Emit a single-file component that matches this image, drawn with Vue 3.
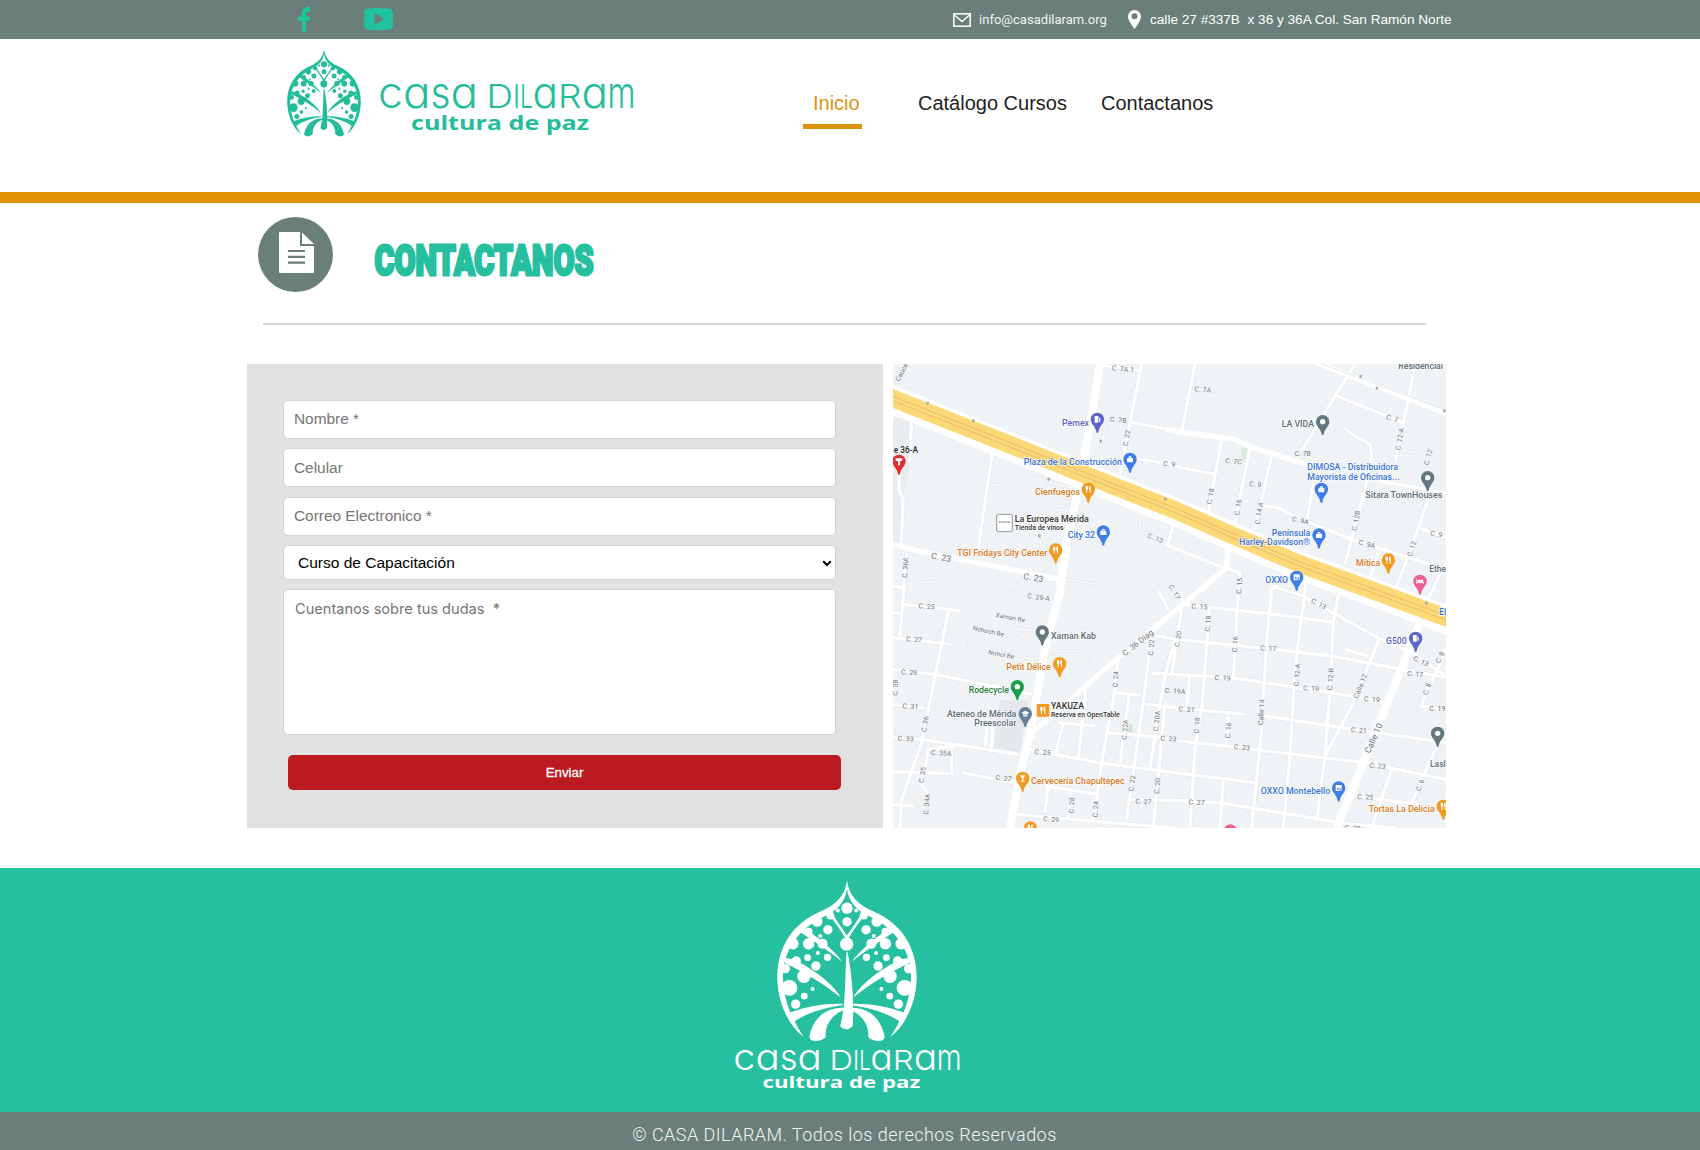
<script setup>
import { ref } from 'vue'

const nombre = ref('')
const celular = ref('')
const correo = ref('')
const curso = ref('Curso de Capacitación')
const dudas = ref('')

const wordmark = [
  { ch: 'c', x: -2, w: 25, low: true },
  { ch: 'a', x: 23, w: 27.5, low: true },
  { ch: 's', x: 50.5, w: 20, low: true },
  { ch: 'a', x: 70.5, w: 27.5, low: true },
  { ch: ' ', x: 98, w: 8, low: false },
  { ch: 'D', x: 106.5, w: 26.5, low: false },
  { ch: 'I', x: 133, w: 7, low: false },
  { ch: 'L', x: 140, w: 13, low: false },
  { ch: 'a', x: 152.5, w: 25.5, low: true },
  { ch: 'R', x: 178, w: 23.5, low: false },
  { ch: 'a', x: 201.5, w: 26.5, low: true },
  { ch: 'm', x: 227.5, w: 28, low: true },
]

// Left half of the tree crown; the right half is its mirror image.
const leaves = [
  [291, 183, 16], [330, 165, 12], [265, 214, 12], [323, 208, 14], [300, 227, 6],
  [218, 250, 17], [265, 250, 17], [307, 250, 15], [262, 292, 10], [293, 278, 6],
  [322, 291, 11], [287, 317, 14], [228, 302, 14], [195, 325, 14], [251, 348, 20],
  [207, 383, 24], [277, 386, 6], [252, 408, 10], [226, 432, 14], [353, 150, 6],
]

const C = {
  blue: '#3f7de8', blueText: '#3a74d8', orange: '#f29a1e', orangeText: '#df7a22',
  slate: '#62777f', slateText: '#5b6d75', violet: '#5b66c6', violetText: '#5d64c4',
  dark: '#333', green: '#1b9e4b', greenText: '#23813f', red: '#e02f2f', pink: '#ee5f92',
}

const wide = [
  'M645 24L625 150L600 290L580 400L545 560L525 705L480 880L435 1135L405 1250L375 1416',
  'M1605 800L1355 1416',
]
const medium = [
  'M24 565L100 585L525 670',
  'M435 1135L700 905L840 790L930 715L1025 635L1030 570',
  'M1295 20L1570 128L1683 172',
  'M840 218L890 228L1050 250L1100 275L1265 325',
]
const small = [
  'M930 24L890 228', 'M735 198L850 220', 'M322 290L280 575', 'M770 24L735 200L705 355', 'M655 28L770 45',
  'M1010 250L970 470', 'M1095 275L1050 500', 'M1163 285L1110 520', 'M840 325L990 355',
  'M735 305L840 322', 'M1135 450L1180 455L1240 485L1300 510L1400 550L1683 640',
  'M1590 24L1570 130L1530 320', 'M1630 430L1570 600L1535 690', 'M1480 375L1683 410',
  'M1460 300L1440 400L1410 510L1380 625', 'M1380 215L1400 235L1455 265L1460 300', 'M1410 24L1350 120L1250 285',
  'M1355 120L1555 200', 'M1285 380L1265 500', 'M1600 515L1683 545', 'M1480 590L1450 680',
  'M840 565L1015 635L1065 650L1060 705', 'M865 500L850 565', 'M80 190L74 320', 'M42 350L42 400L55 430L48 570',
  'M65 590L45 840', 'M24 690L55 695', 'M24 770L45 772', 'M55 745L225 765',
  'M190 765L110 1160L50 1330L45 1416', 'M24 845L200 865', 'M24 940L150 955L440 1015', 'M24 1045L120 1057',
  'M24 1145L110 1150L400 1195', 'M435 1180L640 1220L870 1250L1110 1280', 'M200 1165L200 1253L24 1247',
  'M130 1180L110 1290L130 1312', 'M130 1180L210 1170', 'M24 1345L85 1350', 'M230 1250L410 1285', 'M480 1290L640 1315',
  'M325 1100L318 1178', 'M305 1110L302 1170', 'M535 1100L510 1200', 'M602 1000L580 1205', 'M520 1100L630 1110',
  'M700 905L688 1010L650 1220L625 1400', 'M690 1010L770 1018', 'M732 1020L705 1220', 'M800 830L780 1000L745 1250L725 1390',
  'M870 855L840 955L820 1080L795 1240', 'M840 1040L825 1200L805 1416', 'M670 1130L840 1145', 'M780 1045L870 1055L1080 1075',
  'M800 950L860 955L1040 965L1400 1020L1490 1038', 'M800 835L860 848L1145 878L1340 900L1550 940L1683 965',
  'M820 705L850 760', 'M395 1375L700 1402L870 1416', 'M730 1330L870 1333L1000 1340L1400 1405L1530 1416',
  'M490 1290L480 1370', 'M560 1300L550 1390', 'M890 745L1170 775L1350 800', 'M890 705L892 745L860 955',
  'M975 750L950 1060L930 1180L915 1416', 'M1060 705L1045 970', 'M1160 705L1145 850L1130 1120L1100 1416',
  'M1150 705L1180 690', 'M1265 665L1250 780L1230 940L1215 1200L1195 1416', 'M1345 800L1335 1000L1320 1200L1295 1395',
  'M1482 850L1400 1050L1320 1200', 'M1255 720L1360 780L1480 845L1580 890L1683 960', 'M1160 690L1255 720', 'M1380 880L1450 900',
  'M1140 1080L1440 1125L1683 1160', 'M840 1150L1020 1170L1440 1220L1683 1270', 'M1030 1080L1025 1170',
  'M915 955L905 1050', 'M1015 1275L1005 1416', 'M1683 880L1608 1050L1683 1062', 'M1655 1170L1580 1340',
  'M1520 1240L1460 1416', 'M1410 1320L1600 1345', 'M1365 690L1345 800', 'M1683 620L1630 730',
]
const lanes = [
  'M740 595L850 660L875 720', 'M540 615L640 640', 'M540 670L640 685', 'M270 680L440 715', 'M665 185L655 242L640 300',
  'M615 240L655 243', 'M470 375L560 395L545 465L490 458Z', 'M450 460L480 650', 'M450 460L470 375', 'M430 345L490 365',
  'M765 475L765 525L860 568', 'M640 415L765 475L870 505', 'M100 680L180 675L240 720', 'M320 385L345 388',
  'M265 760L455 800L520 820', 'M265 760L250 865L440 910', 'M370 835L395 805L480 820', 'M370 835L395 850L460 865',
  'M540 780L600 800L620 825L560 812', 'M495 895L605 895L610 925L570 955', 'M735 795L715 820L730 850',
  'M930 98L990 108', 'M1005 315L1090 325', 'M1075 380L1140 395', 'M1180 300L1240 285L1310 305', 'M1530 280L1590 290',
  'M1642 235L1625 330', 'M1425 450L1475 465', 'M1590 430L1575 480', 'M900 655L915 640L950 690', 'M720 140L745 130',
]
const shields = [[128, 142], [265, 195], [491, 370], [841, 430], [1427, 62], [1476, 97], [1678, 165], [647, 256], [463, 540], [1624, 742]]

// text, x, y, rotation, size
const streets = [
  ['Cauce', 56, 52, -62, 20], ['C. 7A.1', 713, 46, 5], ['C. 7B', 699, 199, 5], ['C. 22', 732, 247, -80], ['C. 9', 852, 331, 6],
  ['C. 23', 167, 613, 10, 26], ['C. 23', 444, 674, 10, 26], ['C. 36A', 68, 635, -86], ['C. 13', 809, 553, 20],
  ['C. 7A', 953, 108, 5], ['C. 7C', 1045, 323, 5], ['C. 18', 983, 422, -80], ['C. 16', 1066, 455, -80], ['C. 14 A', 1129, 473, -80],
  ['C. 9', 1110, 392, 6], ['C. 7B', 1253, 299, 0], ['C. 7', 1520, 194, 15], ['C. 12-A', 1551, 250, -80], ['C. 12', 1636, 305, -75],
  ['C. 9A', 1245, 500, 12], ['C. 12B', 1420, 495, -80], ['C. 9A', 1444, 571, 15], ['C. 12', 1587, 580, -72], ['C. 9', 1653, 541, 12],
  ['C. 15', 1070, 690, -86], ['C. 17', 862, 712, 60], ['C. 29-A', 460, 731, 8], ['C. 25', 125, 758, 3], ['C. 27', 87, 857, 3],
  ['C. 29', 72, 956, 3], ['C. 31', 76, 1058, 3], ['C. 33', 62, 1155, 3], ['C. 35A', 168, 1198, 3], ['C. 36', 127, 1105, -82],
  ['C. 35', 119, 1258, -82], ['C. 34A', 132, 1345, -86], ['Xaman Be', 375, 791, 10, 19], ['Nohoch Be', 309, 832, 12, 19],
  ['Nohol Be', 348, 902, 10, 19], ['C. 36 Diag', 763, 867, -38, 24], ['C. 22', 806, 875, -86], ['C. 24', 699, 970, -86],
  ['C. 22A', 727, 1121, -86], ['C. 20A', 822, 1096, -84], ['C. 23', 850, 1155, 3], ['C. 25', 473, 1196, 3], ['C. 27', 355, 1274, 6],
  ['C. 27', 775, 1344, 3], ['C. 22', 748, 1283, -82], ['C. 20', 824, 1290, -86], ['C. 28', 567, 1348, -86], ['C. 24', 639, 1360, -86],
  ['C. 29', 498, 1397, 4], ['C. 38', 38, 995, -88], ['C. 15', 943, 759, 3], ['C. 18', 976, 803, -86],
  ['C. 16', 1057, 865, -86], ['C. 20', 886, 850, -80], ['C. 17', 1150, 884, 3], ['C. 13', 1298, 750, 27], ['C. 19', 1013, 973, 3],
  ['C. 12-A', 1243, 957, -86], ['C. 12-B', 1343, 970, -86], ['Calle 12', 1433, 993, -68, 21], ['C. 19', 1278, 1004, 3], ['C. 19', 1460, 1037, 5],
  ['C. 19A', 870, 1012, 3], ['C. 21', 905, 1067, 3], ['C. 18', 943, 1108, -86], ['C. 16', 1037, 1123, -86], ['Calle 14', 1136, 1069, -87, 21],
  ['C. 23', 1070, 1181, 5], ['C. 21', 1421, 1130, 5], ['Calle 10', 1474, 1150, -66, 26], ['C. 23', 1477, 1237, 5], ['C. 27', 935, 1346, 3],
  ['C. 25', 1440, 1330, 3], ['C. 6', 1612, 1290, -70], ['C. 17', 1590, 961, 5], ['C. 13', 1605, 922, 25], ['C. 8', 1671, 907, -65],
  ['C. 8', 1633, 1001, -70], ['C. 19', 1657, 1064, 0], ['C. 29', 1402, 1423, 5],
]

// text, x, baseline, width, colour, size
const places = [
  ['Pemex', 531, 209, 81, C.violetText], ['e 36-A', 26, 290, 73, '#222', 25], ['Plaza de la Construcción', 416, 327, 295, C.blueText],
  ['Cienfuegos', 450, 417, 135, C.orangeText], ['La Europea Mérida', 389, 497, 222, C.dark], ['Tienda de vinos', 389, 521, 147, C.dark, 21],
  ['City 32', 548, 545, 82, C.blueText], ['TGI Fridays City Center', 217, 599, 270, C.orangeText],
  ['Residencial', 1540, 38, 134, C.slateText], ['LA VIDA', 1190, 213, 97, C.slateText], ['DIMOSA - Distribuidora', 1267, 343, 272, C.blueText],
  ['Mayorista de Oficinas...', 1267, 371, 276, C.blueText], ['Sitara TownHouses', 1441, 427, 231, C.slateText],
  ['Península', 1160, 539, 116, C.blueText], ['Harley-Davidson®', 1062, 566, 213, C.blueText], ['Mítica', 1413, 629, 73, C.orangeText],
  ['Ethe', 1633, 647, 50, C.slateText], ['OXXO', 1141, 681, 68, C.blueText], ['Xaman Kab', 498, 848, 135, C.slateText],
  ['Petit Délice', 364, 943, 133, C.orangeText], ['Rodecycle', 251, 1011, 121, C.greenText], ['Ateneo de Mérida', 186, 1082, 208, C.slateText],
  ['Preescolar', 268, 1109, 126, C.slateText], ['YAKUZA', 498, 1059, 99, C.dark], ['Reserva en OpenTable', 498, 1083, 206, C.dark, 21],
  ['Cervecería Chapultepec', 438, 1285, 281, C.orangeText], ['G500', 1503, 865, 62, C.violetText], ['El', 1663, 778, 20, C.blueText],
  ['Lasl', 1635, 1234, 47, C.slateText], ['OXXO Montebello', 1127, 1313, 209, C.blueText], ['Tortas La Delicia', 1451, 1367, 198, C.orangeText],
]

// x, y of the head, colour, glyph
const pins = [
  [637, 190, C.violet, 'gas'], [42, 316, C.red, 'cross'], [735, 310, C.blue, 'bag'], [610, 400, C.orange, 'food'], [655, 528, C.blue, 'bag'],
  [512, 582, C.orange, 'food'], [1313, 197, C.slate, 'dot'], [1309, 400, C.blue, 'bag'], [1628, 365, C.slate, 'dot'], [1302, 537, C.blue, 'bag'],
  [1510, 612, C.orange, 'food'], [1605, 676, C.pink, 'bed'], [1235, 664, C.blue, 'shop'], [472, 828, C.slate, 'dot'], [524, 923, C.orange, 'food'],
  [397, 992, C.green, 'dot'], [421, 1073, '#68809a', 'cap'], [413, 1267, C.orange, 'drink'], [436, 1416, C.orange, 'food'],
  [1592, 847, C.violet, 'gas'], [1658, 1132, C.slate, 'dot'], [1361, 1296, C.blue, 'shop'], [1675, 1351, C.orange, 'food'], [1036, 1425, C.pink, 'bed'],
]
const glyphs = {
  gas: 'M-8 -10H3V10H-8ZM5 -6L9 -3V7H5Z',
  cross: 'M-10 -9H10V-1H3V12H-3V-1H-10Z',
  bag: 'M-9 -3H-5C-5 -12 5 -12 5 -3H9V9H-9ZM-2 -3H2C2 -7 -2 -7 -2 -3Z',
  food: 'M-8 -10H-1V0L-3 2V11H-6V2L-8 0ZM2 -8Q4 -11 7 -11V11H4V2H2Z',
  dot: 'M0 -8A8 8 0 1 1 0 8A8 8 0 1 1 0 -8Z',
  bed: 'M-11 -7H-9V0H11V8H9V5H-9V8H-11ZM-7 -5H9V-1H-7Z',
  shop: 'M-9 -9H9V9H-9ZM-5 0V5H0V0ZM3 0V9H6V0Z',
  cap: 'M-12 -3L0 -9L12 -3L0 4ZM-7 2L0 6L7 2V6L0 10L-7 6Z',
  drink: 'M-9 -9H9L2 0V7H6V10H-6V7H-2V0Z',
}
</script>

<template>
  <div class="page">
    <svg class="defs" aria-hidden="true">
      <defs>
        <g id="half-tree">
          <path d="M380.500 58C376 105 346 134 302 152C216 188 171 262 171 350C171 422 202 494 250 531C214 474 189 420 188 352C187 268 238 203 312 168C350 150 376 124 380.500 84Z" />
          <path d="M324 158L334 153C350 184 368 206 381 226V238L377 236C362 208 344 186 324 158Z" />
          <path d="M234 212L254 205C290 228 340 268 366 304C330 276 290 248 234 212Z" />
          <path d="M192 292L218 297C276 324 336 368 362 412C316 374 262 342 194 308Z" />
          <path d="M207 458C260 438 320 429 366 431V435C322 442 268 452 220 486Z" />
          <path d="M368 443C312 444 280 474 267 530Q270 543 285 543Q305 543 317 530C312 496 338 460 374 449Z" />
          <circle v-for="(c, i) in leaves" :key="i" :cx="c[0]" :cy="c[1]" :r="c[2]" />
        </g>
        <symbol id="tree" viewBox="170 58 421 488" preserveAspectRatio="none">
          <use href="#half-tree" />
          <use href="#half-tree" transform="translate(761 0) scale(-1 1)" />
          <circle cx="380.500" cy="143" r="17" />
          <circle cx="380.500" cy="184" r="14" />
          <circle cx="379.500" cy="251" r="20" />
          <path d="M379 275C374 350 378 430 360 498Q368 508 382 508Q398 502 398 494C402 430 396 340 382 275Z" />
        </symbol>
      </defs>
    </svg>

    <div class="topbar">
      <div class="social">
        <svg class="fb" viewBox="0 0 12 25"><path d="M4 25V14H0V9.500H4V6C4 2 6.500 0 10 0H12V4.500H10C8.500 4.500 8 5.200 8 6.500V9.500H12L11.500 14H8V25Z" /></svg>
        <svg class="yt" viewBox="0 0 29 22"><path fill-rule="evenodd" d="M4 .5Q14.500 -.5 25 .5Q28.500 .7 28.700 4Q29.300 11 28.700 18Q28.500 21.300 25 21.500Q14.500 22.500 4 21.500Q.5 21.300 .3 18Q-.3 11 .3 4Q.5 .7 4 .5ZM10.500 5V17L20 11Z" /></svg>
      </div>
      <div class="info">
        <svg class="mail" viewBox="0 0 18 14"><rect x=".8" y=".8" width="16.400" height="12.400" /><path d="M1.500 2L9 8.500L16.500 2" /></svg>
        <span class="email">info@casadilaram.org</span>
        <svg class="pin" viewBox="0 0 13 19"><path fill-rule="evenodd" d="M6.500 0A6.500 6.500 0 0 1 13 6.500C13 10 9.500 15 6.500 19C3.500 15 0 10 0 6.500A6.500 6.500 0 0 1 6.500 0ZM6.500 3.300A3 3 0 1 0 6.500 9.300A3 3 0 1 0 6.500 3.300Z" /></svg>
        <span class="address">calle 27 #337B&nbsp; x 36 y 36A Col. San Ramón Norte</span>
      </div>
    </div>

    <header class="header">
      <div class="brand">
        <svg class="brand-tree"><use href="#tree" /></svg>
        <svg class="brand-name" viewBox="0 0 256 54" preserveAspectRatio="none">
          <text class="word" y="25.500"><tspan v-for="(l, i) in wordmark" :key="i" :x="l.x" :textLength="l.w" lengthAdjust="spacingAndGlyphs" :class="l.low ? 'low' : 'cap'">{{ l.ch }}</tspan></text>
          <text class="motto" x="31" y="47.500" textLength="178" lengthAdjust="spacingAndGlyphs">cultura de paz</text>
        </svg>
      </div>
      <nav class="nav">
        <a class="active">Inicio</a>
        <a class="catalog">Catálogo Cursos</a>
        <a>Contactanos</a>
      </nav>
    </header>

    <main>
      <div class="title">
        <svg class="title-icon" viewBox="0 0 75 75">
          <circle cx="37.500" cy="37.500" r="37.500" fill="#6a7f79" />
          <path d="M22 15H42V29H56V55Q56 56 55 56H22Q21 56 21 55V16Q21 15 22 15Z" fill="#fff" />
          <path d="M44 15.500L56 27H44Z" fill="#fff" />
          <path d="M30 34H47M30 39.800H47M30 45.700H47" stroke="#6a7f79" stroke-width="2.200" />
        </svg>
        <svg class="title-text" viewBox="0 0 224 40"><text x="1.500" y="34.700" textLength="219" lengthAdjust="spacingAndGlyphs">CONTACTANOS</text></svg>
      </div>
      <hr class="rule">

      <div class="columns">
        <form class="form" @submit.prevent>
          <input v-model="nombre" class="field" placeholder="Nombre *">
          <input v-model="celular" class="field" placeholder="Celular">
          <input v-model="correo" class="field" placeholder="Correo Electronico *">
          <div class="select">
            <select v-model="curso"><option>Curso de Capacitación</option></select>
            <svg viewBox="0 0 10 7"><path d="M1.200 1.200L5 5L8.800 1.200" /></svg>
          </div>
          <textarea v-model="dudas" class="area" placeholder="Cuentanos sobre tus dudas  *"></textarea>
          <button class="send">Enviar</button>
        </form>

        <svg class="map" viewBox="24 24 1659 1392" preserveAspectRatio="none">
          <rect x="24" y="24" width="1659" height="1392" fill="#f0f3f5" />
          <path d="M345 1030L430 1035L405 1190L325 1178Z" fill="#e5e8ea" />
          <path d="M24 185H80L74 320L55 430L48 560H24Z" fill="#e9ecee" />
          <path d="M1068 272L1092 275L1088 320L1072 308Z" fill="#d4eedd" />
          <path d="M730 1105H742V1130H728Z" fill="#c8e9d4" />
          <g class="edge"><path v-for="d in small" :key="d" :d="d" /></g>
          <g class="lane-edge"><path v-for="d in lanes" :key="d" :d="d" /></g>
          <g class="lane"><path v-for="d in lanes" :key="d" :d="d" /></g>
          <g class="small"><path v-for="d in small" :key="d" :d="d" /></g>
          <g class="medium"><path v-for="d in medium" :key="d" :d="d" /></g>
          <path d="M1310 24L1683 163" stroke="#e3e7e9" stroke-width="3" />
          <g class="wide"><path v-for="d in wide" :key="d" :d="d" /></g>
          <g class="highway">
            <path class="casing" d="M0 122L300 242L610 365L870 467L1040 541L1240 627L1440 700L1700 797" />
            <path class="fill" d="M0 118L300 236L610 360L870 462L1040 537L1240 622L1440 695L1700 791" />
            <path class="line" d="M0 112L300 230L610 354L870 456L1040 531L1240 616L1440 689L1700 785" />
            <path class="line" d="M0 125L300 243L610 367L870 469L1040 544L1240 629L1440 702L1700 798" />
          </g>
          <path v-for="(s, i) in shields" :key="i" :d="`M${s[0] - 4} ${s[1] - 5}h8v6l-4 5l-4 -5z`" fill="#a9aeb4" />
          <text v-for="(s, i) in streets" :key="i" class="street" :font-size="s[4] || 20.500" :transform="`translate(${s[1]} ${s[2]}) rotate(${s[3]})`">{{ s[0] }}</text>
          <g v-for="(p, i) in pins" :key="i" :transform="`translate(${p[0]} ${p[1]})`">
            <path d="M0 -20A20 20 0 0 1 20 0C20 14 6 20 3 38Q0 44 -3 38C-6 20 -20 14 -20 0A20 20 0 0 1 0 -20Z" :fill="p[2]" />
            <path :d="glyphs[p[3]]" fill="#fff" fill-rule="evenodd" />
          </g>
          <rect x="335" y="475" width="47" height="52" rx="5" fill="#fff" stroke="#8f9497" stroke-width="3" />
          <path d="M341 498H376" stroke="#8a9196" stroke-width="5" stroke-dasharray="4 1.500" />
          <g transform="translate(474 1063)">
            <rect x="-19" y="-19" width="38" height="38" rx="3" :fill="C.orange" />
            <path :d="glyphs.food" fill="#fff" />
          </g>
          <text v-for="(p, i) in places" :key="i" class="place" :x="p[1]" :y="p[2]" :textLength="p[3]" lengthAdjust="spacingAndGlyphs" :fill="p[4]" :font-size="p[5] || 26">{{ p[0] }}</text>
        </svg>
      </div>
    </main>

    <footer>
      <div class="foot">
        <svg class="foot-tree"><use href="#tree" /></svg>
        <svg class="foot-name" viewBox="0 0 256 54" preserveAspectRatio="none">
          <text class="word" y="26.500"><tspan v-for="(l, i) in wordmark" :key="i" :x="l.x" :textLength="l.w" lengthAdjust="spacingAndGlyphs" :class="l.low ? 'low' : 'cap'">{{ l.ch }}</tspan></text>
          <text class="motto" x="31" y="48.500" textLength="178" lengthAdjust="spacingAndGlyphs">cultura de paz</text>
        </svg>
      </div>
      <div class="copy">© CASA DILARAM. Todos los derechos Reservados</div>
    </footer>
  </div>
</template>

<style>
body { margin: 0; background: #fff; }
</style>

<style scoped>
.page { width: 1700px; height: 1150px; overflow: hidden; background: #fff; font-family: "Liberation Sans", Arial, sans-serif; }
.page * { box-sizing: border-box; }
.page svg { display: block; flex: none; }
.page .defs { width: 0; height: 0; position: absolute; }

.topbar { height: 39px; background: #6a7f79; display: flex; justify-content: space-between; padding: 0 248px 0 298px; color: #fff; }
.social { display: flex; gap: 54px; fill: #1fc3a0; }
.fb { width: 12px; height: 25px; margin-top: 7px; }
.yt { width: 29px; height: 22px; margin-top: 8px; }
.info { display: flex; align-items: center; width: 499px; white-space: nowrap; }
.mail { width: 18px; height: 14px; fill: none; stroke: #fff; stroke-width: 1.500; }
.email { font: 400 13px Roboto, sans-serif; letter-spacing: .02px; margin-left: 8px; width: 149px; opacity: .9; }
.pin { width: 13px; height: 19px; fill: #fff; }
.address { font-size: 13.600px; margin-left: 9px; }

.header { height: 164px; border-bottom: 11px solid #e09200; display: flex; padding-left: 287px; }
.brand { display: flex; width: 516px; padding-top: 10px; color: #24bd99; }
.brand-tree { width: 74px; height: 88px; fill: currentColor; }
.brand-name { width: 256px; height: 54px; margin: 33px 0 0 19px; fill: currentColor; overflow: visible; }
.word { font-family: Inter, sans-serif; font-weight: 300; font-feature-settings: "cv11"; white-space: pre; }
.low { font-size: 43px; }
.cap { font-size: 33px; }
.motto { font-family: "Open Sans", sans-serif; font-weight: 700; font-size: 20px; }
.nav { display: flex; align-items: flex-start; padding-top: 51px; font-size: 20px; line-height: 26px; color: #222; }
.nav a { white-space: nowrap; }
.nav .active { width: 59px; padding-left: 10px; height: 39px; border-bottom: 5px solid #dc9410; color: #dc9410; margin-right: 56px; }
.nav .catalog { width: 183px; }

.title { display: flex; padding: 14px 0 0 258px; height: 120px; }
.title-icon { width: 75px; height: 75px; }
.title-text { width: 224px; height: 40px; margin: 23px 0 0 40px; overflow: visible; }
.title-text text { font: 900 42.500px Roboto, sans-serif; fill: #26c0a0; stroke: #26c0a0; stroke-width: 3; }
.rule { border: 0; height: 2px; background: #d5d8d7; margin: 0 274px 0 263px; }

.columns { display: flex; gap: 10px; margin: 38.500px 0 40px 247px; height: 464px; }
.form { width: 636px; height: 464px; background: #e2e2e2; padding: 36px 47px 0 36px; }
.field, .area, .select select { display: block; width: 553px; margin: 0; background: #fff; border: 1px solid #d3d3d3; border-radius: 5px; outline: 0; font: 15.400px "Liberation Sans", Arial, sans-serif; color: #000; }
.field { height: 39px; margin-bottom: 9.500px; padding: 0 10px; }
.field::placeholder, .area::placeholder { color: #757575; opacity: 1; }
.select { position: relative; margin-bottom: 9px; }
.select select { appearance: none; height: 35px; padding: 0 14px; font-size: 15.500px; }
.select svg { position: absolute; right: 4px; top: 15px; width: 10px; height: 7px; fill: none; stroke: #000; stroke-width: 2; }
.area { height: 146px; resize: none; padding: 10px 11px; font: 14.600px Inter, sans-serif; white-space: pre-wrap; }
.send { display: block; width: 553px; height: 35px; margin: 20px 0 0 5px; border: 0; border-radius: 5px; background: #bb1a20; color: #fff; font: 13.300px "Liberation Sans", Arial, sans-serif; -webkit-text-stroke: .3px #fff; }

.map { width: 553px; height: 464px; }
.map path { stroke-linejoin: round; }
.edge, .lane-edge, .lane, .small, .medium, .wide, .highway { fill: none; }
.edge { stroke: #e6e9ec; stroke-width: 14px; }
.small { stroke: #fff; stroke-width: 10px; }
.medium { stroke: #fff; stroke-width: 16px; }
.wide { stroke: #fff; stroke-width: 24px; }
.lane-edge { stroke: #dfe3e6; stroke-width: 8px; }
.lane { stroke: #f8f9fa; stroke-width: 5px; }
.casing { stroke: #fff; stroke-width: 84px; }
.fill { stroke: #fcd877; stroke-width: 53px; }
.line { stroke: #e2b668; stroke-width: 2.500px; }
.street { font-family: Roboto, sans-serif; fill: #6f747a; text-anchor: middle; letter-spacing: .3px; paint-order: stroke; stroke: #f6f8f9; stroke-width: 4px; }
.place { font-family: Roboto, sans-serif; font-weight: 500; paint-order: stroke; stroke: #fff; stroke-opacity: .8; stroke-width: 4px; }

.foot { height: 244px; background: #26c0a0; color: #fff; display: flex; flex-direction: column; padding: 12px 0 0 735px; }
.foot-tree { width: 140px; height: 162px; margin-left: 42px; fill: #fff; }
.foot-name { width: 227px; height: 45px; margin-top: 6px; fill: #fff; overflow: visible; }
.copy { height: 39px; background: #6a7f79; color: #f0f4f3; text-align: center; font: 300 18px/45px Roboto, sans-serif; letter-spacing: .47px; padding-right: 11px; }
</style>
